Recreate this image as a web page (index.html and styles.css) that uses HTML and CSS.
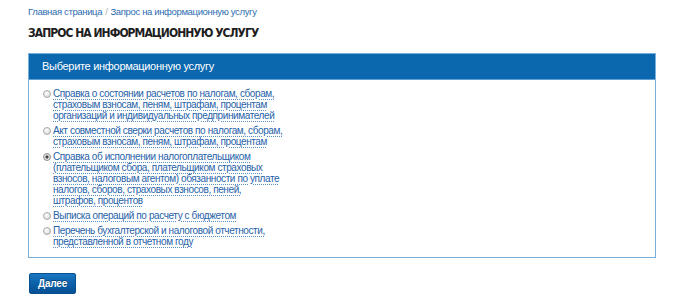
FILE: index.html
```html
<!DOCTYPE html>
<html lang="ru">
<head>
<meta charset="utf-8">
<title>Запрос на информационную услугу</title>
<link rel="stylesheet" href="styles.css">
</head>
<body>
<div class="page">
  <nav class="crumbs"><a href="#">Главная страница</a><span class="sep">/</span><a href="#">Запрос на информационную услугу</a></nav>
  <h1 class="title">ЗАПРОС НА ИНФОРМАЦИОННУЮ УСЛУГУ</h1>
  <section class="panel">
    <div class="panel-head">Выберите информационную услугу</div>
    <ul class="options">
      <li><label><input type="radio" name="svc" class="radio"><span class="link">Справка о состоянии расчетов по налогам, сборам, страховым взносам, пеням, штрафам, процентам организаций и индивидуальных предпринимателей</span></label></li>
      <li><label><input type="radio" name="svc" class="radio"><span class="link">Акт совместной сверки расчетов по налогам, сборам, страховым взносам, пеням, штрафам, процентам</span></label></li>
      <li><label><input type="radio" name="svc" class="radio" checked><span class="link">Справка об исполнении налогоплательщиком (плательщиком сбора, плательщиком страховых взносов, налоговым агентом) обязанности по уплате налогов, сборов, страховых взносов, пеней,<br>штрафов, процентов</span></label></li>
      <li><label><input type="radio" name="svc" class="radio"><span class="link">Выписка операций по расчету с бюджетом</span></label></li>
      <li><label><input type="radio" name="svc" class="radio"><span class="link">Перечень бухгалтерской и налоговой отчетности, представленной в отчетном году</span></label></li>
    </ul>
  </section>
  <button class="btn" type="button">Далее</button>
</div>
</body>
</html>
```
FILE: styles.css
```css
html, body {
  margin: 0;
  padding: 0;
  background: #fff;
}
body {
  font-family: "Liberation Sans", Arial, sans-serif;
  font-size: 11px;
}
.page {
  padding: 5px 44px 0 28px;
}
.crumbs {
  display: block;
  font-size: 9.5px;
  line-height: 13px;
  letter-spacing: -0.35px;
  color: #999;
}
.crumbs a {
  color: #2e6db0;
  text-decoration: none;
}
.crumbs .sep {
  margin: 0 3px;
  color: #aaa;
}
.title {
  margin: 6px 0 0 0;
  font-family: "DejaVu Sans Condensed", "DejaVu Sans", sans-serif;
  font-weight: bold;
  font-size: 12px;
  line-height: 18px;
  letter-spacing: -0.95px;
  color: #1e1e1e;
}
.panel {
  margin-top: 11px;
  width: 626px;
  border: 1px solid #78b0db;
  background: #fff;
}
.panel-head {
  background: #0b67ae;
  color: #fff;
  font-size: 11px;
  letter-spacing: -0.3px;
  line-height: 25px;
  padding-left: 13px;
  border-bottom: 1px solid #5f9fd3;
}
.options {
  list-style: none;
  margin: 0;
  padding: 8px 0 10px 14px;
}
.options li {
  margin: 0 0 4px 0;
}
.options li:last-child {
  margin-bottom: 0;
}
.options label {
  display: flex;
  align-items: flex-start;
  gap: 2px;
}
.radio {
  appearance: none;
  -webkit-appearance: none;
  flex: none;
  width: 8px;
  height: 8px;
  margin: 2px 0 0 0;
  border-radius: 50%;
  border: 1px solid #a9a9a9;
  background: radial-gradient(circle at 40% 35%, #fff 0%, #e6e6e6 55%, #c8c8c8 100%);
  box-sizing: border-box;
}
.radio:checked {
  background: radial-gradient(circle, #333 0%, #4a4a4a 30%, #e8e8e8 45%, #cfcfcf 100%);
  border-color: #8e8e8e;
}
.link {
  width: 234px;
  font-size: 10px;
  line-height: 11px;
  letter-spacing: -0.4px;
  color: #1f62a9;
  text-decoration: underline dotted #5b8fc7;
  text-underline-offset: 2px;
}
.btn {
  display: block;
  margin: 15px 0 0 1px;
  width: 47px;
  height: 21px;
  padding: 0;
  border: 1px solid #06508f;
  border-radius: 2px;
  background: linear-gradient(#1a78c2, #0a5ea6 55%, #064f92);
  color: #fff;
  font-family: "Liberation Sans", Arial, sans-serif;
  font-weight: bold;
  font-size: 10px;
  letter-spacing: -0.2px;
  text-shadow: 0 -1px 0 rgba(0,0,0,0.4);
}
```
